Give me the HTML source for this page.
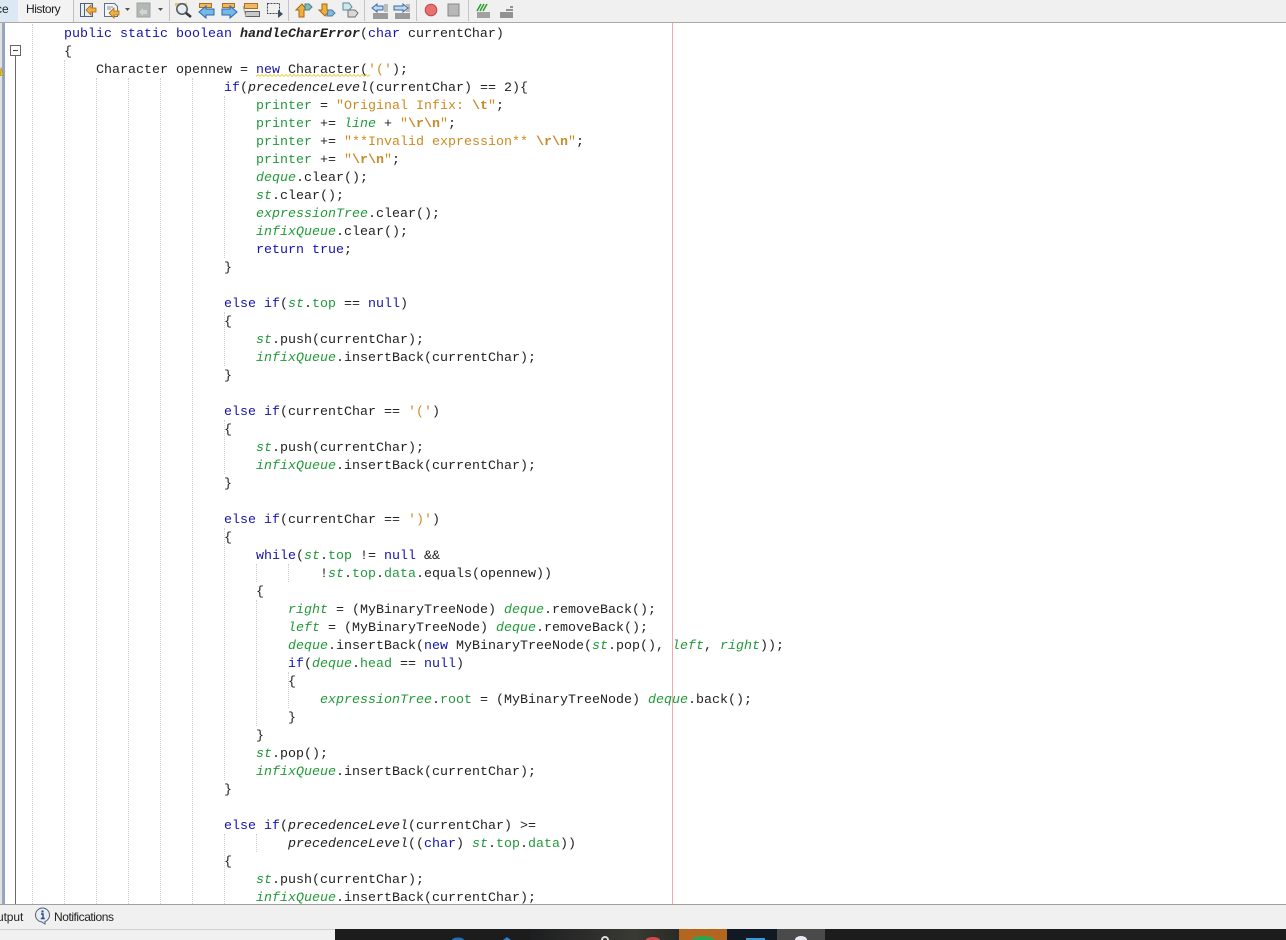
<!DOCTYPE html>
<html>
<head>
<meta charset="utf-8">
<style>
html,body{margin:0;padding:0;background:#fff}
#r{position:relative;width:1286px;height:940px;overflow:hidden;background:#fff;font-family:"Liberation Mono",monospace;font-size:13.33px;color:#222}
.l{position:absolute;white-space:pre;line-height:18px;height:18px;margin:0}
.k{color:#1414b0}
.f{color:#22993a}
.i{color:#22993a;font-style:italic}
.m{font-style:italic}
.s{color:#cc8a22}
.e{color:#c98a28;font-weight:bold}
.b{font-weight:bold;font-style:italic}
.g{position:absolute;width:0;border-left:1px dotted #cfcfcf}
.u{font-family:"Liberation Sans",sans-serif;font-size:12px;position:absolute;color:#222}
svg{position:absolute}
</style>
</head>
<body>
<div id="r">
<!-- toolbar -->
<div style="position:absolute;left:0;top:0;width:1286px;height:22px;background:#f0f0f0;border-bottom:1px solid #a8a8a8"></div>
<div style="position:absolute;left:0;top:0;width:18px;height:22px;background:#dce9f5"></div>
<div style="position:absolute;left:18px;top:0;width:55px;height:22px;background:#f3f3f3;border-right:1px solid #c0c0c0"></div>
<div class="u" style="left:-4px;top:2px">ce</div>
<div class="u" style="left:26px;top:2px;letter-spacing:-.45px">History</div>
<svg width="560" height="22" style="left:0;top:0">
<g stroke="#c4c4c4"><path d="M169.500 0V21M288.500 0V21M364.500 0V21M416.500 0V21M468.500 0V21"/></g>
<!-- 1 last edit -->
<rect x="80.500" y="3.500" width="12" height="13" fill="#e8eef5" stroke="#50607a"/><path d="M84.500 3V16" stroke="#50607a"/><path d="M86 10l5-5v3h5v4h-5v3z" fill="#f0b040" stroke="#a86810" stroke-width=".8"/>
<!-- 2 -->
<path d="M104.500 3.500h10l3 3v10h-13z" fill="#f4f6f8" stroke="#60708a"/><path d="M107 7h6M107 9h4" stroke="#8090a8"/><path d="M109 13l5-5v3h5v4h-5v3z" fill="#f0b040" stroke="#a86810" stroke-width=".8"/>
<path d="M125 8h5l-2.500 3z" fill="#555"/>
<!-- 3 disabled -->
<rect x="137" y="3" width="13" height="14" fill="#b4b8b4" stroke="#a0a4a0"/><path d="M139 12l4-4v2h4v4h-4v2z" fill="#d4d4d4"/>
<path d="M158 8h5l-2.500 3z" fill="#555"/>
<!-- find -->
<rect x="175" y="3" width="12" height="3" fill="#f0c070"/>
<circle cx="182" cy="9" r="5.200" fill="#e8eef0" stroke="#505860" stroke-width="1.500"/><path d="M186 13l5 4" stroke="#303840" stroke-width="2.500"/>
<!-- prev -->
<rect x="199.500" y="3.500" width="12" height="4" fill="#f0b860" stroke="#a87020"/><path d="M199 12l7-6v3h8v6h-8v3z" fill="#78b8e8" stroke="#2868a8"/>
<!-- next -->
<rect x="222.500" y="3.500" width="12" height="4" fill="#f0b860" stroke="#a87020"/><path d="M237 12l-7-6v3h-8v6h8v3z" fill="#78b8e8" stroke="#2868a8"/>
<!-- toggle -->
<rect x="244.500" y="3.500" width="13" height="5" fill="#f0b860" stroke="#a87020"/><rect x="245.500" y="11.500" width="14" height="5" fill="#c8c8c8" stroke="#606060"/><path d="M243 6l3 11" stroke="#aaa"/>
<!-- rect sel -->
<rect x="267.500" y="3.500" width="12" height="10" fill="none" stroke="#444" stroke-dasharray="2 1"/><path d="M278 10l5 4-5 4z" fill="#405060"/>
<!-- shape up/down -->
<path d="M296 10l6-6 5 6h-3v7h-5v-7z" fill="#f0b040" stroke="#a86810"/><path d="M305 4h4l3 3-3 3h-4z" fill="#80c0b8" stroke="#488080"/>
<path d="M322 4h5v6h3l-5 6-6-6h3z" fill="#f0b040" stroke="#a86810"/><path d="M328 10h4l3 3-3 3h-5z" fill="#80b8d8" stroke="#4880a0"/>
<path d="M343 3h6l3 4-3 3h-6z" fill="#d0e8e8" stroke="#5888a0"/><path d="M348 10h7l3 3-3 4h-7z" fill="#d8d8d8" stroke="#707070"/>
<!-- shift -->
<path d="M372 8l5-4v2h6v4h-6v2z" fill="#c0d8f0" stroke="#3868a0"/><path d="M384 5h4M384 7h4M384 9h4M384 11h4" stroke="#888"/><path d="M373 14h15M373 16h15M373 18h15" stroke="#444"/>
<path d="M408 8l-5-4v2h-9v4h9v2z" fill="#c0d8f0" stroke="#3868a0"/><path d="M406 5h4M406 7h4M406 9h4M406 11h4" stroke="#888"/><path d="M395 14h15M395 16h15M395 18h15" stroke="#444"/>
<!-- record -->
<circle cx="431" cy="10" r="5.800" fill="#e87070" stroke="#c04848"/>
<rect x="448" y="4" width="11" height="12" fill="#b8b8b8" stroke="#888"/>
<!-- comment -->
<path d="M477 11l4-7M480 11l4-7M483 11l4-7" stroke="#28a028" stroke-width="1.500"/><path d="M477 13h13M477 15h13M477 17h13" stroke="#555"/>
<path d="M510 7h3M506 10h7M500 13h13M500 15h13M500 17h13" stroke="#333"/>
</svg>

<!-- gutter -->
<div style="position:absolute;left:0;top:23px;width:2px;height:881px;background:#e2e2e2"></div>
<div style="position:absolute;left:2px;top:23px;width:1px;height:881px;background:#a8a8a8"></div>
<div style="position:absolute;left:3px;top:23px;width:2px;height:881px;background:#8aa6cf"></div>
<div style="position:absolute;left:15px;top:55px;width:1px;height:849px;background:#6a6a6a"></div>
<svg width="24" height="60" style="left:0;top:40px">
<rect x="10.500" y="5.500" width="10" height="10" fill="#fff" stroke="#666"/><path d="M13 10.500h5" stroke="#444"/>
<path d="M0 35.500l1-8 2.500 8z" fill="#e8c820" stroke="#a08010" stroke-width=".5"/>
</svg>

<!-- right margin -->
<div style="position:absolute;left:672px;top:23px;width:1px;height:881px;background:#f0a8a8"></div>

<!-- indent guides -->
<div class="g" style="left:32px;top:24px;height:880px"></div>
<div class="g" style="left:64px;top:60px;height:844px"></div>
<div class="g" style="left:96px;top:78px;height:826px"></div>
<div class="g" style="left:128px;top:78px;height:826px"></div>
<div class="g" style="left:160px;top:78px;height:826px"></div>
<div class="g" style="left:192px;top:78px;height:826px"></div>
<div class="g" style="left:224px;top:96px;height:162px"></div>
<div class="g" style="left:224px;top:312px;height:54px"></div>
<div class="g" style="left:224px;top:420px;height:54px"></div>
<div class="g" style="left:224px;top:528px;height:252px"></div>
<div class="g" style="left:224px;top:834px;height:70px"></div>
<div class="g" style="left:256px;top:564px;height:18px"></div>
<div class="g" style="left:288px;top:564px;height:18px"></div>
<div class="g" style="left:256px;top:600px;height:126px"></div>
<div class="g" style="left:256px;top:834px;height:18px"></div>
<div class="g" style="left:288px;top:672px;height:36px"></div>

<!-- wave underline -->
<svg width="114" height="3" style="left:256px;top:74px">
<defs><pattern id="w" width="4" height="3" patternUnits="userSpaceOnUse"><path d="M0 2.500l2-2 2 2" fill="none" stroke="#e8d040" stroke-width=".9"/></pattern></defs>
<rect width="114" height="3" fill="url(#w)"/>
</svg>

<!-- code -->
<div style="position:absolute;left:0;top:2px;width:1286px;height:902px;overflow:hidden">
<div class="l" style="left:64px;top:24px"><span class="k">public static boolean</span> <span class="b">handleCharError</span>(<span class="k">char</span> currentChar)</div>
<div class="l" style="left:64px;top:42px">{</div>
<div class="l" style="left:96px;top:60px">Character opennew = <span class="k">new</span> Character(<span class="s">'('</span>);</div>
<div class="l" style="left:224px;top:78px"><span class="k">if</span>(<span class="m">precedenceLevel</span>(currentChar) == 2){</div>
<div class="l" style="left:256px;top:96px"><span class="f">printer</span> = <span class="s">"Original Infix: </span><span class="e">\t</span><span class="s">"</span>;</div>
<div class="l" style="left:256px;top:114px"><span class="f">printer</span> += <span class="i">line</span> + <span class="s">"</span><span class="e">\r\n</span><span class="s">"</span>;</div>
<div class="l" style="left:256px;top:132px"><span class="f">printer</span> += <span class="s">"**Invalid expression** </span><span class="e">\r\n</span><span class="s">"</span>;</div>
<div class="l" style="left:256px;top:150px"><span class="f">printer</span> += <span class="s">"</span><span class="e">\r\n</span><span class="s">"</span>;</div>
<div class="l" style="left:256px;top:168px"><span class="i">deque</span>.clear();</div>
<div class="l" style="left:256px;top:186px"><span class="i">st</span>.clear();</div>
<div class="l" style="left:256px;top:204px"><span class="i">expressionTree</span>.clear();</div>
<div class="l" style="left:256px;top:222px"><span class="i">infixQueue</span>.clear();</div>
<div class="l" style="left:256px;top:240px"><span class="k">return true</span>;</div>
<div class="l" style="left:224px;top:258px">}</div>
<div class="l" style="left:224px;top:294px"><span class="k">else if</span>(<span class="i">st</span>.<span class="f">top</span> == <span class="k">null</span>)</div>
<div class="l" style="left:224px;top:312px">{</div>
<div class="l" style="left:256px;top:330px"><span class="i">st</span>.push(currentChar);</div>
<div class="l" style="left:256px;top:348px"><span class="i">infixQueue</span>.insertBack(currentChar);</div>
<div class="l" style="left:224px;top:366px">}</div>
<div class="l" style="left:224px;top:402px"><span class="k">else if</span>(currentChar == <span class="s">'('</span>)</div>
<div class="l" style="left:224px;top:420px">{</div>
<div class="l" style="left:256px;top:438px"><span class="i">st</span>.push(currentChar);</div>
<div class="l" style="left:256px;top:456px"><span class="i">infixQueue</span>.insertBack(currentChar);</div>
<div class="l" style="left:224px;top:474px">}</div>
<div class="l" style="left:224px;top:510px"><span class="k">else if</span>(currentChar == <span class="s">')'</span>)</div>
<div class="l" style="left:224px;top:528px">{</div>
<div class="l" style="left:256px;top:546px"><span class="k">while</span>(<span class="i">st</span>.<span class="f">top</span> != <span class="k">null</span> &amp;&amp;</div>
<div class="l" style="left:320px;top:564px">!<span class="i">st</span>.<span class="f">top</span>.<span class="f">data</span>.equals(opennew))</div>
<div class="l" style="left:256px;top:582px">{</div>
<div class="l" style="left:288px;top:600px"><span class="i">right</span> = (MyBinaryTreeNode) <span class="i">deque</span>.removeBack();</div>
<div class="l" style="left:288px;top:618px"><span class="i">left</span> = (MyBinaryTreeNode) <span class="i">deque</span>.removeBack();</div>
<div class="l" style="left:288px;top:636px"><span class="i">deque</span>.insertBack(<span class="k">new</span> MyBinaryTreeNode(<span class="i">st</span>.pop(), <span class="i">left</span>, <span class="i">right</span>));</div>
<div class="l" style="left:288px;top:654px"><span class="k">if</span>(<span class="i">deque</span>.<span class="f">head</span> == <span class="k">null</span>)</div>
<div class="l" style="left:288px;top:672px">{</div>
<div class="l" style="left:320px;top:690px"><span class="i">expressionTree</span>.<span class="f">root</span> = (MyBinaryTreeNode) <span class="i">deque</span>.back();</div>
<div class="l" style="left:288px;top:708px">}</div>
<div class="l" style="left:256px;top:726px">}</div>
<div class="l" style="left:256px;top:744px"><span class="i">st</span>.pop();</div>
<div class="l" style="left:256px;top:762px"><span class="i">infixQueue</span>.insertBack(currentChar);</div>
<div class="l" style="left:224px;top:780px">}</div>
<div class="l" style="left:224px;top:816px"><span class="k">else if</span>(<span class="m">precedenceLevel</span>(currentChar) &gt;=</div>
<div class="l" style="left:288px;top:834px"><span class="m">precedenceLevel</span>((<span class="k">char</span>) <span class="i">st</span>.<span class="f">top</span>.<span class="f">data</span>))</div>
<div class="l" style="left:224px;top:852px">{</div>
<div class="l" style="left:256px;top:870px"><span class="i">st</span>.push(currentChar);</div>
<div class="l" style="left:256px;top:888px"><span class="i">infixQueue</span>.insertBack(currentChar);</div>
</div>

<!-- bottom bar -->
<div style="position:absolute;left:0;top:904px;width:1286px;height:25px;background:#f0f0f0;border-top:1px solid #a0a0a0;box-sizing:border-box"></div>
<div style="position:absolute;left:0;top:929px;width:1286px;height:11px;background:#f0f0f0;border-top:1px solid #d0d0d0;box-sizing:border-box"></div>
<div class="u" style="left:-3px;top:910px;letter-spacing:-.1px">utput</div>
<svg width="20" height="20" style="left:34px;top:907px">
<circle cx="8.500" cy="8" r="7" fill="#e6edf4" stroke="#556070"/>
<path d="M7 14.500l4 2.500 0-3" fill="#e6edf4" stroke="#556070"/>
<path d="M7 7h2v4.500M6.800 11.500h4" fill="none" stroke="#2a4a80" stroke-width="1.400"/><rect x="7.500" y="3.500" width="2" height="2" fill="#2a4a80"/>
</svg>
<div class="u" style="left:54px;top:910px;letter-spacing:-.45px">Notifications</div>

<!-- taskbar -->
<div style="position:absolute;left:335px;top:929px;width:951px;height:11px;background:#1c1c1c"></div>
<div style="position:absolute;left:530px;top:929px;width:149px;height:11px;background:linear-gradient(90deg,#1c1e20,#3a3a34 70%,#2a2a26)"></div>
<div style="position:absolute;left:679px;top:929px;width:48px;height:11px;background:#b2661f"></div>
<div style="position:absolute;left:727px;top:929px;width:50px;height:11px;background:#111a24"></div>
<div style="position:absolute;left:777px;top:929px;width:48px;height:11px;background:#4a4a4a"></div>
<svg width="951" height="11" style="left:335px;top:929px">
<ellipse cx="123" cy="11" rx="6" ry="2.500" fill="#1d6fb8"/>
<path d="M168 11l4-3 4 3z" fill="#2d80c8"/>
<path d="M266 11a4 4 0 0 1 8 0h-2a2 2 0 0 0-4 0z" fill="#ddd"/>
<ellipse cx="318" cy="11" rx="7" ry="3" fill="#d84848"/>
<ellipse cx="368" cy="11" rx="11" ry="4" fill="#2ea44f"/>
<rect x="411" y="9" width="19" height="2" fill="#3a98d8"/>
<ellipse cx="466" cy="11" rx="6" ry="4" fill="#e8e8f0"/>
</svg>
</div>
</body>
</html>
